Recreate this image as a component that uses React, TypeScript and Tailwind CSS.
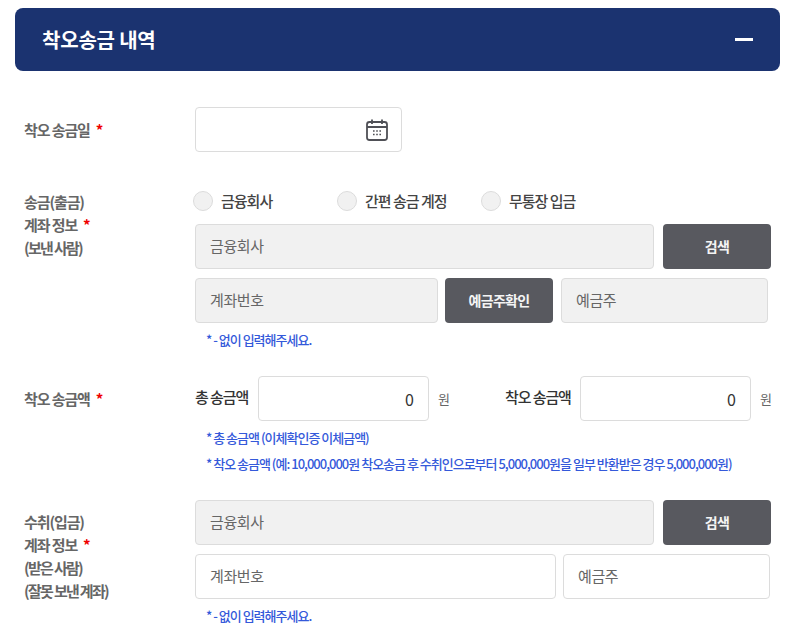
const font = "font-['Noto_Sans_CJK_KR','Noto_Sans',sans-serif]";

function Field({ text, width, filled }: { text: string; width: string; filled?: boolean }) {
  return (
    <div
      className={`${width} h-[45px] shrink-0 flex items-center px-[14px] border border-[#dcdcdc] rounded-[4px] text-[15px] tracking-[-0.4px] text-[#666] ${
        filled ? 'bg-[#f1f1f1]' : 'bg-white'
      }`}
    >
      {text}
    </div>
  );
}

function DarkButton({ text, width }: { text: string; width: string }) {
  return (
    <div className={`${width} h-[45px] shrink-0 flex items-center justify-center rounded-[4px] bg-[#58595f] text-[#f4f4f4] text-[14px] font-bold tracking-[-0.7px]`}>
      {text}
    </div>
  );
}

function Radio({ text, width }: { text: string; width: string }) {
  return (
    <div className={`${width} flex items-center gap-[8px]`}>
      <span className="w-[20px] h-[20px] rounded-full border border-[#dcdcdc] bg-[#f1f1f1]" />
      <span className="text-[15px] font-medium tracking-[-1px] text-[#444]">{text}</span>
    </div>
  );
}

function Label({ lines, starLine }: { lines: string[]; starLine: number }) {
  return (
    <div className="w-[170px] shrink-0 -ml-[1px] mr-[1px] text-[15px] font-bold tracking-[-1.1px] leading-[23px] text-[#666]">
      {lines.map((line, i) => (
        <div key={i} className={line.startsWith('(') ? 'tracking-[-1.7px]' : ''}>
          {line}
          {i === starLine && <span className="ml-[6px] text-[#f00000]">*</span>}
        </div>
      ))}
    </div>
  );
}

function Note({ text }: { text: string }) {
  return <div className="pl-[11px] text-[13px] font-medium tracking-[-1px] leading-[18px] text-[#3459da]">{text}</div>;
}

function CalendarIcon() {
  return (
    <svg width="24" height="24" viewBox="0 0 24 24" fill="none" stroke="#4f5056" strokeWidth="1.8">
      <rect x="2" y="4" width="20" height="18" rx="2.5" />
      <path d="M2 9h20M7 1.5v4.5M17 1.5v4.5" />
      <path d="M8 13h1.6M11.2 13h1.6M14.4 13h1.6M8 16.5h1.6M11.2 16.5h1.6M14.4 16.5h1.6" strokeWidth="1.5" />
    </svg>
  );
}

export default function App() {
  return (
    <div className={`${font} w-[792px] h-[641px] overflow-hidden bg-white`}>
      <div className="ml-[15px] mt-[8px] w-[765px] h-[63px] rounded-[8px] bg-[#1b3370] flex items-center justify-between pl-[27px] pr-[27px]">
        <h2 className="text-[20px] font-bold tracking-[-0.2px] text-white">착오송금 내역</h2>
        <span className="w-[18px] h-[3px] bg-white" />
      </div>

      <div className="pl-[25px] pt-[36px]">
        <div className="flex items-center">
          <Label lines={['착오 송금일']} starLine={0} />
          <div className="w-[207px] h-[45px] flex items-center justify-end pr-[12px] border border-[#dcdcdc] rounded-[4px]">
            <CalendarIcon />
          </div>
        </div>

        <div className="flex mt-[38px]">
          <Label lines={['송금(출금)', '계좌 정보', '(보낸 사람)']} starLine={1} />
          <div>
            <div className="flex -ml-[2px] h-[22px] items-center">
              <Radio text="금융회사" width="w-[144px]" />
              <Radio text="간편 송금 계정" width="w-[144px]" />
              <Radio text="무통장 입금" width="w-[120px]" />
            </div>
            <div className="flex mt-[12px] gap-[9px]">
              <Field text="금융회사" width="w-[459px]" filled />
              <DarkButton text="검색" width="w-[108px]" />
            </div>
            <div className="flex mt-[9px]">
              <Field text="계좌번호" width="w-[243px]" filled />
              <div className="ml-[7px]">
                <DarkButton text="예금주확인" width="w-[108px]" />
              </div>
              <div className="ml-[8px]">
                <Field text="예금주" width="w-[207px]" filled />
              </div>
            </div>
            <div className="mt-[8px]">
              <Note text="* - 없이 입력해주세요." />
            </div>
          </div>
        </div>

        <div className="flex mt-[27px]">
          <div className="pt-[11px]">
            <Label lines={['착오 송금액']} starLine={0} />
          </div>
          <div>
            <div className="flex items-center h-[45px]">
              <span className="w-[63px] text-[15px] font-medium tracking-[-1.1px] text-[#333] -mt-[3px]">총 송금액</span>
              <div className="w-[171px] h-[45px] flex items-center justify-end pr-[14px] border border-[#dcdcdc] rounded-[4px] text-[16px] text-[#333]">0</div>
              <span className="w-[76px] pl-[9px] text-[13px] text-[#666]">원</span>
              <span className="w-[75px] text-[15px] font-medium tracking-[-1.1px] text-[#333] -mt-[3px]">착오 송금액</span>
              <div className="w-[171px] h-[45px] flex items-center justify-end pr-[14px] border border-[#dcdcdc] rounded-[4px] text-[16px] text-[#333]">0</div>
              <span className="pl-[9px] text-[13px] text-[#666]">원</span>
            </div>
            <div className="mt-[8px]">
              <Note text="* 총 송금액 (이체확인증 이체금액)" />
            </div>
            <div className="mt-[8px]">
              <Note text="* 착오 송금액 (예: 10,000,000원 착오송금 후 수취인으로부터 5,000,000원을 일부 반환받은 경우 5,000,000원)" />
            </div>
          </div>
        </div>

        <div className="flex mt-[27px]">
          <div className="pt-[10px]">
            <Label lines={['수취(입금)', '계좌 정보', '(받은 사람)', '(잘못 보낸 계좌)']} starLine={1} />
          </div>
          <div>
            <div className="flex gap-[9px]">
              <Field text="금융회사" width="w-[459px]" filled />
              <DarkButton text="검색" width="w-[108px]" />
            </div>
            <div className="flex mt-[9px] gap-[7px]">
              <Field text="계좌번호" width="w-[361px]" />
              <Field text="예금주" width="w-[207px]" />
            </div>
            <div className="mt-[8px]">
              <Note text="* - 없이 입력해주세요." />
            </div>
          </div>
        </div>
      </div>
    </div>
  );
}
